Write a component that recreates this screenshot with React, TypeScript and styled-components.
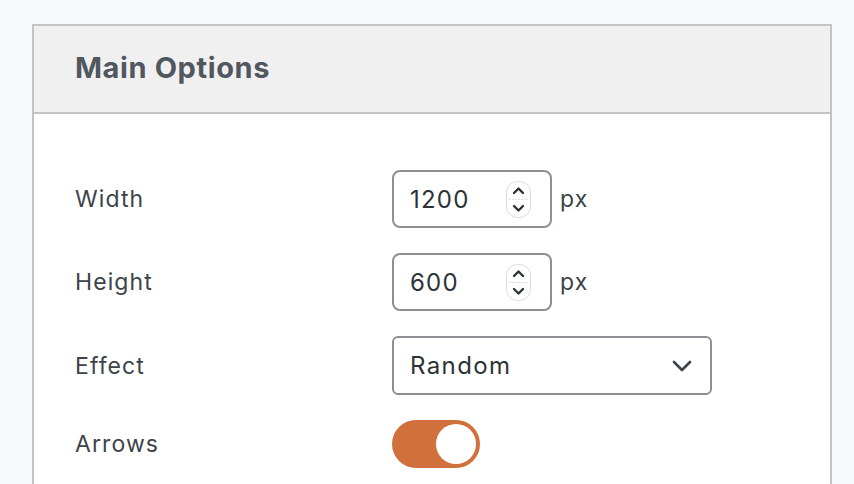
import React from "react";
import styled, { createGlobalStyle } from "styled-components";

const GlobalStyle = createGlobalStyle`
  html, body {
    margin: 0;
    padding: 0;
    background: #f8f9fb;
    font-family: Inter, "Liberation Sans", sans-serif;
    color: #3c434a;
  }
`;

const Page = styled.div`
  padding: 24px 22px 0 32px;
  height: 484px;
  box-sizing: border-box;
  overflow: hidden;
`;

const Panel = styled.section`
  width: 800px;
  box-sizing: border-box;
  border: 2px solid #c3c4c7;
  border-bottom: none;
  background: #fff;
`;

const PanelHeader = styled.header`
  height: 86px;
  display: flex;
  align-items: center;
  padding-left: 41px;
  background: #f0f0f1;
  border-bottom: 2px solid #c3c4c7;
`;

const Title = styled.h2`
  margin: 0 0 4px;
  font-size: 29px;
  font-weight: 700;
  color: #50575e;
  letter-spacing: 0.6px;
`;

const Body = styled.div`
  padding: 56px 41px 40px;
  display: grid;
  grid-template-columns: 317px 1fr;
  row-gap: 25px;
  align-items: center;
`;

const Label = styled.div`
  font-size: 23px;
  letter-spacing: 1.1px;
  color: #3c434a;
`;

const Control = styled.div`
  display: flex;
  align-items: center;
  gap: 8px;
`;

const NumberBox = styled.div`
  width: 160px;
  height: 58px;
  box-sizing: border-box;
  border: 2px solid #8c8f94;
  border-radius: 8px;
  display: flex;
  align-items: center;
  justify-content: space-between;
  padding: 0 19px 0 16px;
  font-size: 24px;
  letter-spacing: 1.2px;
  color: #2c3338;
`;

const Unit = styled.span`
  font-size: 23px;
  letter-spacing: 1.1px;
  color: #3c434a;
`;

const Select = styled.div<{ $width: number }>`
  width: ${(p) => p.$width}px;
  height: 59px;
  box-sizing: border-box;
  border: 2px solid #8c8f94;
  border-radius: 6px;
  display: flex;
  align-items: center;
  justify-content: space-between;
  padding: 0 18px 0 16px;
  font-size: 24px;
  letter-spacing: 1.4px;
  color: #2c3338;
`;

const Toggle = styled.div<{ $on: boolean }>`
  width: 88px;
  height: 48px;
  border-radius: 24px;
  background: ${(p) => (p.$on ? "#d0703a" : "#c3c4c7")};
  display: flex;
  align-items: center;
  justify-content: ${(p) => (p.$on ? "flex-end" : "flex-start")};
  padding: 0 4px;
  box-sizing: border-box;
`;

const Knob = styled.span`
  width: 40px;
  height: 40px;
  border-radius: 50%;
  background: #fff;
`;

function Spinner() {
  return (
    <svg width="25" height="37" viewBox="0 0 25 37">
      <rect x="0.5" y="0.5" width="24" height="36" rx="11" fill="#fff" stroke="#dcdcde" />
      <line x1="3" y1="18.5" x2="22" y2="18.5" stroke="#dcdcde" strokeDasharray="2 1" />
      <path d="M8 12 L12.5 7.5 L17 12" fill="none" stroke="#2c3338" strokeWidth="2.4" strokeLinecap="round" strokeLinejoin="round" />
      <path d="M8 25 L12.5 29.5 L17 25" fill="none" stroke="#2c3338" strokeWidth="2.4" strokeLinecap="round" strokeLinejoin="round" />
    </svg>
  );
}

function Chevron() {
  return (
    <svg width="20" height="12" viewBox="0 0 20 12">
      <path d="M2 2 L10 10 L18 2" fill="none" stroke="#3c434a" strokeWidth="2.6" strokeLinecap="round" strokeLinejoin="round" />
    </svg>
  );
}

function NumberField({ value, unit }: { value: number; unit: string }) {
  return (
    <Control>
      <NumberBox>
        <span>{value}</span>
        <Spinner />
      </NumberBox>
      <Unit>{unit}</Unit>
    </Control>
  );
}

export default function App() {
  return (
    <>
      <GlobalStyle />
      <Page>
        <Panel>
          <PanelHeader>
            <Title>Main Options</Title>
          </PanelHeader>
          <Body>
            <Label>Width</Label>
            <NumberField value={1200} unit="px" />
            <Label>Height</Label>
            <NumberField value={600} unit="px" />
            <Label>Effect</Label>
            <Control>
              <Select $width={320}>
                <span>Random</span>
                <Chevron />
              </Select>
            </Control>
            <Label>Arrows</Label>
            <Control>
              <Toggle $on>
                <Knob />
              </Toggle>
            </Control>
          </Body>
        </Panel>
      </Page>
    </>
  );
}
